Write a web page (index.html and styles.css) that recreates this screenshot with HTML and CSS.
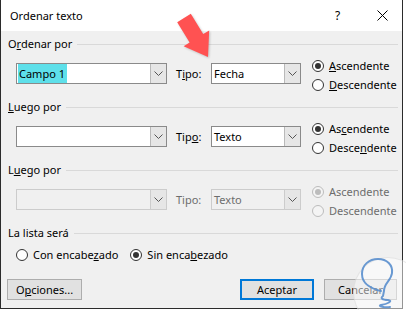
FILE: index.html
```html
<!DOCTYPE html>
<html lang="es">
<head>
    <meta charset="UTF-8">
    <title>Ordenar texto</title>
    <link rel="stylesheet" href="styles.css">
</head>
<body>
    <div class="screen">
        <!-- Ventana del cuadro de diálogo -->
        <div class="dialog">
            <div class="titlebar">
                <span class="title">Ordenar texto</span>
                <span class="help">?</span>
                <span class="close">
                    <svg width="11" height="11" viewBox="0 0 11 11"><path d="M0.5 0.5 L10.5 10.5 M10.5 0.5 L0.5 10.5" stroke="#000" stroke-width="1"/></svg>
                </span>
            </div>

            <div class="content">
                <!-- Ordenar por -->
                <section class="group">
                    <div class="legend"><span>O<u>r</u>denar por</span></div>
                    <div class="sort-row">
                        <div class="combo combo-field">
                            <span class="value"><span class="selected">Campo 1</span></span>
                            <span class="drop"><svg width="9" height="5" viewBox="0 0 9 5"><path d="M0.5 0.5 L4.5 4.5 L8.5 0.5" fill="none" stroke="#555" stroke-width="1"/></svg></span>
                        </div>
                        <span class="type-label">T<u>i</u>po:</span>
                        <div class="combo combo-type">
                            <span class="value">Fecha</span>
                            <span class="drop"><svg width="9" height="5" viewBox="0 0 9 5"><path d="M0.5 0.5 L4.5 4.5 L8.5 0.5" fill="none" stroke="#555" stroke-width="1"/></svg></span>
                        </div>
                        <div class="order">
                            <div class="radio checked"><span class="circle"></span><span><u>A</u>scendente</span></div>
                            <div class="radio"><span class="circle"></span><span><u>D</u>escendente</span></div>
                        </div>
                    </div>
                </section>

                <!-- Luego por -->
                <section class="group">
                    <div class="legend"><span><u>L</u>uego por</span></div>
                    <div class="sort-row">
                        <div class="combo combo-field">
                            <span class="value"></span>
                            <span class="drop"><svg width="9" height="5" viewBox="0 0 9 5"><path d="M0.5 0.5 L4.5 4.5 L8.5 0.5" fill="none" stroke="#555" stroke-width="1"/></svg></span>
                        </div>
                        <span class="type-label">Tip<u>o</u>:</span>
                        <div class="combo combo-type">
                            <span class="value">Texto</span>
                            <span class="drop"><svg width="9" height="5" viewBox="0 0 9 5"><path d="M0.5 0.5 L4.5 4.5 L8.5 0.5" fill="none" stroke="#555" stroke-width="1"/></svg></span>
                        </div>
                        <div class="order">
                            <div class="radio checked"><span class="circle"></span><span>As<u>c</u>endente</span></div>
                            <div class="radio"><span class="circle"></span><span>Desce<u>n</u>dente</span></div>
                        </div>
                    </div>
                </section>

                <!-- Luego por (desactivado) -->
                <section class="group disabled">
                    <div class="legend"><span>L<u>u</u>ego por</span></div>
                    <div class="sort-row">
                        <div class="combo combo-field">
                            <span class="value"></span>
                            <span class="drop"><svg width="9" height="5" viewBox="0 0 9 5"><path d="M0.5 0.5 L4.5 4.5 L8.5 0.5" fill="none" stroke="#555" stroke-width="1"/></svg></span>
                        </div>
                        <span class="type-label">Tipo:</span>
                        <div class="combo combo-type">
                            <span class="value">Texto</span>
                            <span class="drop"><svg width="9" height="5" viewBox="0 0 9 5"><path d="M0.5 0.5 L4.5 4.5 L8.5 0.5" fill="none" stroke="#555" stroke-width="1"/></svg></span>
                        </div>
                        <div class="order">
                            <div class="radio checked"><span class="circle"></span><span>Ascendente</span></div>
                            <div class="radio"><span class="circle"></span><span>Descendente</span></div>
                        </div>
                    </div>
                </section>

                <!-- La lista será -->
                <section class="list-group">
                    <div class="legend"><span>La lista será</span></div>
                    <div class="header-row">
                        <div class="radio"><span class="circle"></span><span>Con encabe<u>z</u>ado</span></div>
                        <div class="radio checked"><span class="circle"></span><span>Sin enca<u>b</u>ezado</span></div>
                    </div>
                </section>

                <!-- Botones -->
                <div class="buttons">
                    <button class="btn btn-options">O<u>p</u>ciones...</button>
                    <button class="btn btn-default">Aceptar</button>
                    <button class="btn">Cancelar</button>
                </div>
            </div>
        </div>

        <!-- Flecha roja -->
        <svg class="arrow" width="406" height="310" viewBox="0 0 406 310">
            <polygon points="177.2,22.2 190.8,13.8 203.2,34.1 209.2,30.4 208,57 183.6,46.2 189.6,42.5" fill="#ff5252"/>
        </svg>

        <!-- Marca de agua -->
        <div class="watermark"></div>
        <svg class="watermark-mark" width="406" height="310" viewBox="0 0 406 310">
            <path d="M381 291 C372 289 362 284 362 274 C362 265 369 259 378 259 C387 259 393 265 392 273 C391 281 384 283 384 291 L383 296 C380 298 382 300 388 300 C394 301 387 304 381 305 C377 306 385 308 390 307" fill="none" stroke="#5a8fce" stroke-width="2" stroke-linecap="round"/>
        </svg>
    </div>
</body>
</html>
```

FILE: styles.css
```css
/* Estilos globales */
* {
    margin: 0;
    padding: 0;
    box-sizing: border-box;
}

body {
    font-family: "Noto Sans", "Open Sans", sans-serif;
    font-size: 11px;
    color: #000;
    background: #fff;
}

u {
    text-decoration: underline;
    text-underline-offset: 1px;
}

.screen {
    position: relative;
    width: 406px;
    height: 310px;
    overflow: hidden;
}

/* Ventana */
.dialog {
    width: 403px;
    height: 309px;
    background: #f0f0f0;
    border-left: 1px solid #2b2b2b;
    border-right: 1px solid #2b2b2b;
    border-bottom: 1px solid #2b2b2b;
    display: flex;
    flex-direction: column;
}

/* Barra de título */
.titlebar {
    height: 31px;
    background: #fff;
    display: flex;
    align-items: center;
    padding-left: 9px;
}

.title {
    flex: 1;
    font-size: 11px;
    line-height: 31px;
}

.help {
    width: 49px;
    text-align: center;
    font-size: 12px;
    line-height: 31px;
}

.close {
    width: 40px;
    height: 31px;
    display: flex;
    align-items: center;
    justify-content: center;
}

/* Contenido */
.content {
    flex: 1;
    padding: 5px 4px 0 7px;
}

.legend {
    height: 16px;
    display: flex;
    align-items: center;
    gap: 5px;
    line-height: 16px;
    white-space: nowrap;
}

.legend::after {
    content: '';
    flex: 1;
    height: 1px;
    background: #d9d9d9;
}

.sort-row {
    height: 47px;
    display: flex;
    align-items: flex-start;
}

/* Combos */
.combo {
    height: 21px;
    margin-top: 11px;
    display: flex;
    background: #fff;
    border: 1px solid #8a8a8a;
}

.combo-field {
    width: 151px;
    margin-left: 8px;
}

.combo-type {
    width: 90px;
}

.combo .value {
    flex: 1;
    line-height: 19px;
    padding-left: 1px;
    white-space: nowrap;
}

.combo-type .value {
    padding-left: 2px;
}

.selected {
    display: inline-block;
    background: #5ee0ea;
    padding: 0 2px 0 1px;
}

.drop {
    width: 16px;
    background: #e6e6e6;
    border-left: 1px solid #b9b9b9;
    display: flex;
    align-items: center;
    justify-content: center;
}

.type-label {
    width: 35px;
    margin-left: 9px;
    margin-top: 11px;
    line-height: 21px;
}

/* Botones de opción */
.order {
    margin-left: 11px;
    padding-top: 4px;
}

.radio {
    height: 19px;
    display: flex;
    align-items: center;
    gap: 5px;
    white-space: nowrap;
}

.circle {
    width: 12px;
    height: 12px;
    border-radius: 50%;
    border: 1px solid #333;
    background: #fff;
    display: flex;
    align-items: center;
    justify-content: center;
}

.radio.checked .circle::after {
    content: '';
    width: 6px;
    height: 6px;
    border-radius: 50%;
    background: #333;
}

/* Estado desactivado */
.disabled .sort-row {
    color: #6d6d6d;
}

.disabled .combo {
    background: #f0f0f0;
    border-color: #cccccc;
}

.disabled .drop {
    border-left-color: #cccccc;
}

.disabled .circle {
    border-color: #bcbcbc;
    background: #f4f4f4;
}

.disabled .radio.checked .circle::after {
    background: #bcbcbc;
}

/* La lista será */
.header-row {
    display: flex;
    gap: 12px;
    margin-top: 4px;
    padding-left: 8px;
}

/* Botones */
.buttons {
    display: flex;
    gap: 10px;
    margin-top: 15px;
    margin-right: 1px;
}

.btn {
    height: 21px;
    width: 73px;
    font-family: inherit;
    font-size: 11px;
    color: #000;
    background: #e1e1e1;
    border: 1px solid #adadad;
}

.btn-options {
    width: 75px;
    margin-left: -1px;
    margin-right: auto;
}

.btn-default {
    width: 74px;
    border: 2px solid #0078d7;
}

/* Flecha */
.arrow {
    position: absolute;
    left: 0;
    top: 0;
    filter: drop-shadow(1px 1px 1px rgba(0, 0, 0, 0.2));
}

/* Marca de agua */
.watermark {
    position: absolute;
    left: 353px;
    top: 257px;
    width: 70px;
    height: 70px;
    border-radius: 50%;
    background: rgba(255, 255, 255, 0.5);
    border: 1px solid rgba(200, 200, 200, 0.4);
}

.watermark-mark {
    position: absolute;
    left: 0;
    top: 0;
    opacity: 0.9;
}
```
